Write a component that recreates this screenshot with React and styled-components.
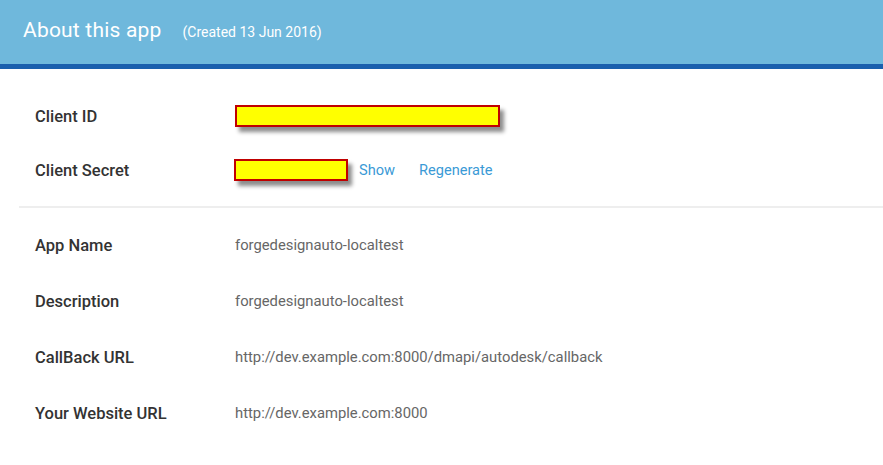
import React from 'react';
import styled, { createGlobalStyle } from 'styled-components';

const GlobalStyle = createGlobalStyle`
  html, body {
    margin: 0;
    padding: 0;
    background: #fff;
    font-family: Roboto, "Noto Sans", sans-serif;
  }
`;

const Page = styled.div`
  width: 883px;
  height: 465px;
  overflow: hidden;
`;

const Header = styled.div`
  height: 69px;
  box-sizing: border-box;
  background: #6fb8dc;
  border-bottom: 5px solid #1a5fad;
  display: flex;
  align-items: center;
  padding: 0 0 4px 23px;
  color: #fff;
`;

const Title = styled.h1`
  margin: 0;
  font-size: 21px;
  font-weight: 400;
  letter-spacing: 0.2px;
`;

const Created = styled.span`
  margin-left: 21px;
  font-size: 14px;
  padding-top: 3px;
`;

const Section = styled.div`
  padding: ${(p) => p.$pad};
  border-bottom: ${(p) => (p.$divided ? '2px solid #eee' : 'none')};
  margin-left: 19px;
  display: flex;
  flex-direction: column;
  gap: ${(p) => p.$gap}px;
`;

const Row = styled.div`
  display: flex;
  align-items: center;
  height: ${(p) => p.$h}px;
  padding-left: 16px;
`;

const Label = styled.div`
  width: 200px;
  flex-shrink: 0;
  font-size: 16.5px;
  font-weight: 500;
  color: #333;
`;

const Value = styled.div`
  font-size: 14.8px;
  color: #666;
`;

const Redacted = styled.div`
  width: ${(p) => p.$w}px;
  height: 18px;
  background: #ffff00;
  border: 2px solid #c00000;
  box-shadow: 4px 5px 4px rgba(0, 0, 0, 0.45);
  margin-left: ${(p) => p.$offset}px;
`;

const LinkButton = styled.a`
  font-size: 14.6px;
  color: #3a9ad6;
  margin-left: ${(p) => p.$gap}px;
  cursor: pointer;
`;

const details = [
  ['App Name', 'forgedesignauto-localtest'],
  ['Description', 'forgedesignauto-localtest'],
  ['CallBack URL', 'http://dev.example.com:8000/dmapi/autodesk/callback'],
  ['Your Website URL', 'http://dev.example.com:8000'],
];

export default function App() {
  return (
    <Page>
      <GlobalStyle />
      <Header>
        <Title>About this app</Title>
        <Created>(Created 13 Jun 2016)</Created>
      </Header>
      <Section $divided $pad="36px 0 25px" $gap={32}>
        <Row $h={22}>
          <Label>Client ID</Label>
          <Redacted $w={261} $offset={0} />
        </Row>
        <Row $h={22}>
          <Label>Client Secret</Label>
          <Redacted $w={110} $offset={-1} />
          <LinkButton $gap={11}>Show</LinkButton>
          <LinkButton $gap={24}>Regenerate</LinkButton>
        </Row>
      </Section>
      <Section $pad="27px 0 0" $gap={36}>
        {details.map(([label, value]) => (
          <Row key={label} $h={20}>
            <Label>{label}</Label>
            <Value>{value}</Value>
          </Row>
        ))}
      </Section>
    </Page>
  );
}
